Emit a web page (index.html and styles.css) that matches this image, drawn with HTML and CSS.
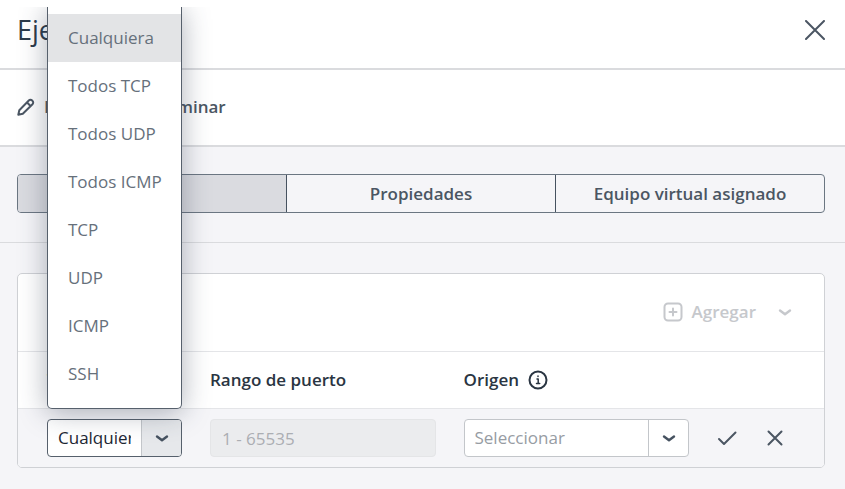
FILE: index.html
```html
<!DOCTYPE html>
<html lang="es">
<head>
    <meta charset="UTF-8">
    <meta name="viewport" content="width=device-width, initial-scale=1.0">
    <title>Reglas de firewall</title>
    <link rel="stylesheet" href="styles.css">
</head>
<body>
    <header class="header">
        <h1 class="title">Ejemplo</h1>
        <button class="icon-button" type="button" aria-label="Cerrar">
            <svg width="20" height="20" viewBox="0 0 20 20"><path d="M1 1l18 18M19 1L1 19"/></svg>
        </button>
    </header>

    <div class="toolbar">
        <button class="action" type="button">
            <svg width="18" height="18" viewBox="0 0 18 18"><path d="M1.300 16.700l1-4.500L11.800 2.500a2.300 2.300 0 0 1 3.300 0l.4.400a2.300 2.300 0 0 1 0 3.300L5.800 15.700zM10.800 5.200l2 2"/></svg>
            Editar
        </button>
        <button class="action" type="button">
            <svg width="18" height="18" viewBox="0 0 18 18"><path d="M2 4h14M6 4V2h6v2M4 4l1 12h8l1-12"/></svg>
            Eliminar
        </button>
    </div>

    <nav class="tabs-bar">
        <div class="tabs" role="tablist">
            <button class="tab tab-active" type="button" role="tab" aria-selected="true">Reglas</button>
            <button class="tab" type="button" role="tab" aria-selected="false">Propiedades</button>
            <button class="tab" type="button" role="tab" aria-selected="false">Equipo virtual asignado</button>
        </div>
    </nav>

    <main class="content">
        <section class="panel">
            <div class="panel-header">
                <button class="add-button" type="button" disabled>
                    <svg width="20" height="20" viewBox="0 0 20 20"><rect x="1.500" y="1.500" width="17" height="17" rx="3.500"/><path d="M10 6.500v7M6.500 10h7"/></svg>
                    Agregar
                    <svg class="add-caret" width="14" height="14" viewBox="0 0 14 14"><path d="M2 5.500l5 3.800 5-3.800"/></svg>
                </button>
            </div>
            <table class="rules">
                <colgroup>
                    <col class="col-type">
                    <col>
                    <col>
                    <col class="col-actions">
                </colgroup>
                <thead>
                    <tr>
                        <th id="type-label">Tipo</th>
                        <th id="range-label">Rango de puerto</th>
                        <th>
                            <span class="th-info">
                                <span id="origin-label">Origen</span>
                                <svg width="20" height="20" viewBox="0 0 20 20"><circle cx="10" cy="10" r="8.500"/><path class="info-mark" d="M9 9h1.200v4.500M8.500 13.500h3.200M10 6v.6"/></svg>
                            </span>
                        </th>
                        <td></td>
                    </tr>
                </thead>
                <tbody>
                    <tr>
                        <td>
                            <div class="combo combo-open">
                                <input class="combo-input" type="text" value="Cualquiera" role="combobox" aria-expanded="true" aria-controls="type-menu" aria-labelledby="type-label">
                                <button class="combo-caret" type="button" aria-label="Mostrar opciones">
                                    <svg width="14" height="14" viewBox="0 0 14 14"><path d="M2 5.500l5 3.800 5-3.800"/></svg>
                                </button>
                                <ul class="menu" id="type-menu" role="listbox" aria-labelledby="type-label">
                                    <li class="option option-selected" role="option" aria-selected="true">Cualquiera</li>
                                    <li class="option" role="option">Todos TCP</li>
                                    <li class="option" role="option">Todos UDP</li>
                                    <li class="option" role="option">Todos ICMP</li>
                                    <li class="option" role="option">TCP</li>
                                    <li class="option" role="option">UDP</li>
                                    <li class="option" role="option">ICMP</li>
                                    <li class="option" role="option">SSH</li>
                                </ul>
                            </div>
                        </td>
                        <td>
                            <input class="range-input" type="text" placeholder="1 - 65535" aria-labelledby="range-label" disabled>
                        </td>
                        <td>
                            <div class="combo">
                                <select class="combo-select" aria-labelledby="origin-label">
                                    <option>Seleccionar</option>
                                </select>
                                <span class="combo-caret">
                                    <svg width="14" height="14" viewBox="0 0 14 14"><path d="M2 5.500l5 3.800 5-3.800"/></svg>
                                </span>
                            </div>
                        </td>
                        <td>
                            <div class="row-actions">
                                <button class="icon-button" type="button" aria-label="Guardar">
                                    <svg width="20" height="20" viewBox="0 0 20 20"><path d="M2 11l5 5L18.500 4.500"/></svg>
                                </button>
                                <button class="icon-button" type="button" aria-label="Cancelar">
                                    <svg width="20" height="20" viewBox="0 0 20 20"><path d="M3.500 3.500l13 13M16.500 3.500l-13 13"/></svg>
                                </button>
                            </div>
                        </td>
                    </tr>
                </tbody>
            </table>
        </section>
    </main>
</body>
</html>
```
FILE: styles.css
```css
* {
    box-sizing: border-box;
}
body {
    margin: 0;
    background: #f5f5f8;
    color: #4b5663;
    font-family: "Open Sans", sans-serif;
    font-size: 17px;
    line-height: 24px;
}
button, input, select {
    font: inherit;
    color: inherit;
}
button {
    padding: 0;
    border: none;
    background: none;
    cursor: pointer;
}
svg {
    display: block;
    flex: none;
    fill: none;
    stroke: currentColor;
    stroke-width: 2;
    stroke-linecap: round;
    stroke-linejoin: round;
}
.header {
    display: flex;
    justify-content: space-between;
    align-items: center;
    padding: 12px 20px 20px 17px;
    background: #fff;
    border-bottom: 2px solid #dadbde;
}
.title {
    margin: 0;
    color: #2b3a4a;
    font-size: 27px;
    font-weight: 400;
    line-height: 36px;
}
.toolbar {
    display: flex;
    gap: 38px;
    padding: 25px 17px 26px;
    background: #fff;
    border-bottom: 2px solid #dadbde;
}
.action {
    display: flex;
    align-items: center;
    gap: 9px;
    font-weight: 600;
}
.tabs-bar {
    padding: 27px 20px 29px 17px;
    border-bottom: 1px solid #dadbde;
}
.tabs {
    display: flex;
    border: 1px solid #6b7682;
    border-radius: 4px;
}
.tab {
    flex: 1 1 0;
    height: 37px;
    font-weight: 600;
}
.tab + .tab {
    border-left: 1px solid #465260;
}
.tab-active {
    background: #dadbe0;
    border-radius: 3px 0 0 3px;
}
.content {
    padding: 30px 20px 20px 17px;
}
.panel {
    background: #fff;
    border: 1px solid #cfd1d5;
    border-radius: 5px;
}
.panel-header {
    display: flex;
    justify-content: flex-end;
    padding: 26px 32px 27px;
}
.add-button {
    display: flex;
    align-items: center;
    gap: 9px;
    color: #c6c8cc;
    font-weight: 600;
}
.add-caret {
    margin-left: 13px;
}
.add-caret, .combo-caret svg {
    stroke-width: 2.4;
}
.rules {
    width: 100%;
    table-layout: fixed;
    border-collapse: separate;
    border-spacing: 0;
}
.col-type {
    width: 178px;
}
.col-actions {
    width: 121px;
}
.rules th, .rules td {
    padding: 0 14px;
    border-top: 1px solid #e4e5e8;
    text-align: left;
}
.rules th:first-child, .rules td:first-child {
    padding-left: 29px;
}
.rules th {
    height: 57px;
    color: #2a3542;
    font-weight: 600;
}
.rules tbody td {
    height: 59px;
    background: #f5f5f8;
}
.rules tbody td:first-child {
    border-bottom-left-radius: 4px;
}
.rules tbody td:last-child {
    border-bottom-right-radius: 4px;
}
.th-info {
    display: flex;
    align-items: center;
    gap: 9px;
}
.info-mark {
    stroke-width: 1.5;
}
.combo {
    position: relative;
    display: flex;
    height: 38px;
    background: #fff;
    border: 1px solid #c3c6ca;
    border-radius: 4px;
}
.combo-open {
    border-color: #56606c;
    color: #1d2733;
}
.combo-input {
    flex: 1;
    min-width: 0;
    padding: 0 10px;
    border: none;
    border-radius: 4px;
    background: none;
    outline: none;
}
.combo-select {
    flex: 1;
    min-width: 0;
    padding: 0 10px;
    border: none;
    background: none;
    color: #979ca3;
    appearance: none;
}
.combo-caret {
    display: flex;
    justify-content: center;
    align-items: center;
    width: 40px;
    border-left: 1px solid #c3c6ca;
    color: #465260;
}
.combo-open .combo-caret {
    background: #e6e8eb;
    border-radius: 0 3px 3px 0;
}
/* opens upwards, the shadow stays below the top edge */
.menu {
    position: absolute;
    right: -1px;
    bottom: 47px;
    left: -1px;
    z-index: 1;
    margin: 0;
    padding: 7px 0 10px;
    list-style: none;
    background: #fff;
    border: 1px solid #56606c;
    border-top: none;
    border-radius: 0 0 5px 5px;
    box-shadow: 0 3px 28px rgba(50, 60, 80, 0.4);
    clip-path: inset(0 -40px -40px -40px);
    color: #66707b;
}
.option {
    padding: 12px 20px;
    white-space: nowrap;
}
.option-selected {
    background: #e3e4e6;
}
.range-input {
    display: block;
    width: 100%;
    height: 38px;
    padding: 0 11px;
    border: 1px solid #e4e5e7;
    border-radius: 4px;
    background: #ebecee;
}
.range-input::placeholder {
    color: #abaeb3;
}
.row-actions {
    display: flex;
    gap: 28px;
}
```
